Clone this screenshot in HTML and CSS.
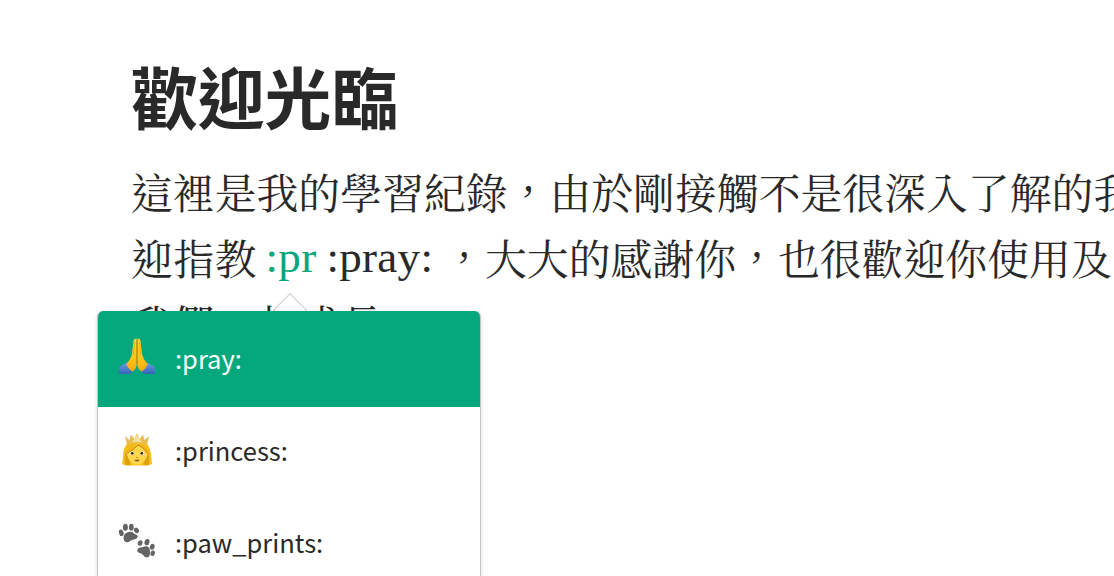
FILE: index.html
```html
<!DOCTYPE html>
<html lang="zh-TW">
<head>
<meta charset="utf-8"/>
<title>歡迎光臨</title>
<link rel="stylesheet" href="styles.css">
</head>
<body>

<div class="editor">
	<h1>歡迎光臨</h1>
	<p>
		<span class="line">這裡是我的學習紀錄，由於剛接觸不是很深入了解的我</span>
		<span class="line">迎指教<span class="latin query">:pr</span><span class="latin code">:pray:</span>，大大的感謝你，也很歡迎你使用及</span>
		<span class="line">我們一起成長</span>
	</p>
</div>

<!-- emoji autocomplete -->
<div class="popup">
	<div class="arrow"></div>
	<ul class="menu">
		<li class="active">
			<svg class="emoji" width="38" height="38" viewBox="0 0 38 38">
				<defs>
					<linearGradient id="hand" x1="0" y1="0" x2="0" y2="1">
						<stop offset="0" stop-color="#ffd633"/>
						<stop offset=".65" stop-color="#ffc313"/>
						<stop offset="1" stop-color="#f5a51c"/>
					</linearGradient>
					<linearGradient id="cuff" x1="0" y1="0" x2="0" y2="1">
						<stop offset="0" stop-color="#6b9fe6"/>
						<stop offset="1" stop-color="#3265b4"/>
					</linearGradient>
				</defs>
				<path d="M1 30 L9 25.500 L16 33 L12 37 H1 Z" fill="url(#cuff)"/>
				<path d="M37 30 L29 25.500 L22 33 L26 37 H37 Z" fill="url(#cuff)"/>
				<path d="M18.800 2 Q16 1 15.500 4 L14 17 Q12.500 23 8.500 26.500 Q9.500 32 14.500 34.500 Q18.800 32 18.800 26 Z" fill="url(#hand)"/>
				<path d="M19.200 2 Q22 1 22.500 4 L24 17 Q25.500 23 29.500 26.500 Q28.500 32 23.500 34.500 Q19.200 32 19.200 26 Z" fill="url(#hand)"/>
				<path d="M19 2.500 V27" stroke="#b97a0b" stroke-width="1" fill="none"/>
				<path d="M16.400 5 L15.500 18 M21.600 5 L22.500 18" stroke="#e39b0c" stroke-width=".7" fill="none"/>
			</svg>
			<span>:pray:</span>
		</li>
		<li>
			<svg class="emoji" width="38" height="38" viewBox="0 0 38 38">
				<path d="M10 12 Q19 5 28 12 Q32 15 33 23 Q33.500 28 34 33 Q30 35.500 25 34.500 H13 Q8 35.500 4 33 Q5 28 5 23 Q6 15 10 12 Z" fill="#f7c320"/>
				<path d="M8 18 Q6 27 7 34 H13 L11 28 Q8.500 24 9 18 Z M30 18 Q32 27 31 34 H25 L27 28 Q29.500 24 29 18 Z" fill="#dfa00e"/>
				<path d="M9 22 Q9 13 20 12 Q29 13 29.500 22 Q29 28 24 32 Q19 35 14 32 Q9.500 28 9 22 Z" fill="#ffd94a"/>
				<path d="M8 23 Q15 20 20 14 Q26 16 30 24 Q31 16 25 13 L12 12 Q7 16 8 23 Z" fill="#f4b91b"/>
				<path d="M9 22 Q16 19 20 14 Q26 16 29 22" fill="none" stroke="#ba7c13" stroke-width=".9"/>
				<path d="M9 14 L7 5 L11.500 9 L13 3.500 L16.500 8 L19 2 L21.500 8 L25 3.500 L26.500 9 L31 5 L29 14 Q19 10 9 14 Z" fill="#e8bd51"/>
				<path d="M14 11 L15.500 9 L19 4 L22.500 9 L24 11 Z" fill="#f3dda0"/>
				<ellipse cx="14" cy="22.300" rx="2.300" ry="1.900" fill="#fff"/>
				<ellipse cx="24" cy="22.300" rx="2.300" ry="1.900" fill="#fff"/>
				<circle cx="14.200" cy="22.300" r="1.500" fill="#52371e"/>
				<circle cx="23.800" cy="22.300" r="1.500" fill="#52371e"/>
				<path d="M18 26.500 H20" stroke="#c48416" stroke-width=".8"/>
				<path d="M16 29 Q19 28 22 29 Q19 32 16 29 Z" fill="#a5552f"/>
			</svg>
			<span>:princess:</span>
		</li>
		<li>
			<svg class="emoji paws" width="38" height="38" viewBox="0 0 38 38" fill="#646464">
				<ellipse cx="3.300" cy="11.800" rx="2.300" ry="3.300" transform="rotate(-15 3.300 11.800)"/>
				<ellipse cx="7.400" cy="6.300" rx="2.500" ry="3.500"/>
				<ellipse cx="13.300" cy="6.200" rx="2.400" ry="3.400"/>
				<ellipse cx="18.500" cy="9.400" rx="2.300" ry="2.900" transform="rotate(-35 18.500 9.400)"/>
				<path d="M6 14.500 Q7.500 11.200 11.500 10.700 Q15 10.500 16.500 13 Q20 14 19.700 16 Q19 18 15.800 18.500 Q13.200 19 11 20.800 Q8 22.300 6.200 19.700 Q4.800 17 6 14.500 Z"/>
				<ellipse cx="22.200" cy="22" rx="2.300" ry="2.800" transform="rotate(25 22.200 22)"/>
				<ellipse cx="29" cy="21.200" rx="2.500" ry="3.200" transform="rotate(15 29 21.200)"/>
				<ellipse cx="34.300" cy="25.800" rx="2.300" ry="3" transform="rotate(18 34.300 25.800)"/>
				<ellipse cx="34.700" cy="32.300" rx="2.200" ry="2.800" transform="rotate(15 34.700 32.300)"/>
				<path d="M20 27.500 Q22 26.200 24.300 26.300 Q28 24.200 31 26.500 Q32.500 29 32 32 Q32 36 29 36.500 Q26.500 36 25 34 Q23.500 32.200 21 31.800 Q18 30.500 20 27.500 Z"/>
			</svg>
			<span>:paw_prints:</span>
		</li>
	</ul>
</div>

</body>
</html>
```
FILE: styles.css
```css
html, body { height: 100%; }
body {
	margin: 0;
	overflow: hidden;
	background: #fff;
	color: #292929;
	font-family: "Noto Sans CJK TC", sans-serif;
}
.editor { padding: 45px 0 0 131px; }
h1 {
	margin: 0;
	font-size: 66.8px;
	line-height: 100px;
	font-weight: bold;
}
p {
	margin: 13px 0 0;
	font-family: "Noto Serif CJK TC", serif;
	font-size: 41.85px;
	line-height: 66px;
	font-weight: normal;
}
.line { display: block; height: 66px; white-space: nowrap; }
.latin {
	font-family: "Liberation Serif", serif;
	font-size: 45px;
	line-height: 1;
	letter-spacing: .3px;
	vertical-align: 3px;
}
.query { margin-left: 9px; color: #05a87d; }
.code { margin: 0 10px; }

.popup { position: absolute; left: 97px; top: 311px; }
.arrow {
	position: absolute;
	left: 181px;
	top: -13px;
	width: 24px;
	height: 24px;
	background: #fff;
	border: 1px solid #ccc;
	transform: rotate(45deg);
	box-sizing: border-box;
}
.menu {
	position: relative;
	margin: 0;
	padding: 0;
	width: 382px;
	height: 265px;
	list-style: none;
	overflow: hidden;
	background: #fff;
	border: 1px solid #c4c4c4;
	border-width: 0 1px;
	border-radius: 6px 6px 0 0;
	box-shadow: 0 1px 4px rgba(0,0,0,.15);
}
.menu li {
	display: flex;
	align-items: center;
	height: 92px;
	padding-left: 20px;
	gap: 19px;
	font-size: 25.5px;
}
.menu li span { margin-top: -7px; }
.menu .active { height: 96px; background: #05a87d; color: #fff; }
.menu .active span { margin-top: -3px; }
.emoji { flex: none; margin-top: -6px; }
.paws { margin-top: -10px; }
```
